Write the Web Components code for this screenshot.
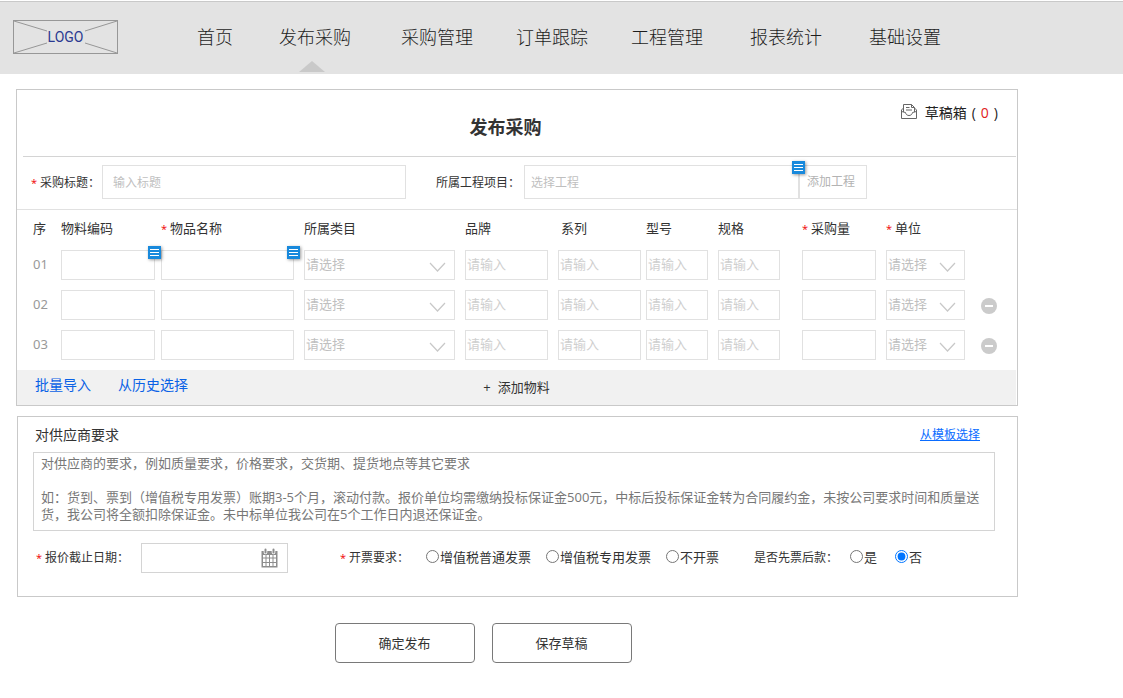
<!DOCTYPE html>
<html lang="zh-CN">
<head>
<meta charset="utf-8">
<meta name="viewport" content="width=device-width, initial-scale=1">
<title>发布采购</title>
<style>
  body {
    margin: 0;
    background: #fff;
    color: #333;
    font: 13px/18px "Open Sans", "Noto Sans CJK SC", sans-serif;
    --line: #c9c9c9;
    --line-soft: #e1e1e1;
    --hint: #bfbfbf;
    --link: #0a62e6;
  }
</style>
</head>
<body>
<site-header>
  <nav-tab>首页</nav-tab>
  <nav-tab active>发布采购</nav-tab>
  <nav-tab>采购管理</nav-tab>
  <nav-tab>订单跟踪</nav-tab>
  <nav-tab>工程管理</nav-tab>
  <nav-tab>报表统计</nav-tab>
  <nav-tab>基础设置</nav-tab>
</site-header>
<publish-page></publish-page>

<script>
function define(name, html, setup) {
  const template = document.createElement('template');
  template.innerHTML = html;
  customElements.define(name, class extends HTMLElement {
    connectedCallback() {
      if (this.shadowRoot) return;
      this.attachShadow({ mode: 'open' }).append(template.content.cloneNode(true));
      if (setup) setup(this, this.shadowRoot);
    }
  });
}

/* ---------- small parts ---------- */

define('logo-mark', `
  <style>
    :host { display: block; width: 105px; height: 34px; position: relative; }
    svg { display: block; }
    span { position: absolute; inset: 0; text-align: center; color: #2b3990;
      font: 14px/34px Roboto, sans-serif; }
  </style>
  <svg width="105" height="34" fill="none" stroke="#979797" aria-hidden="true">
    <rect x=".5" y=".5" width="104" height="33"/>
    <path d="M1 1l33 10M104 1L72 11M1 33l33-10M104 33L72 23"/>
  </svg>
  <span>LOGO</span>
`);

define('nav-tab', `
  <style>
    :host { display: block; position: relative; }
    a { color: #1c1c1c; text-decoration: none; font-size: 18px; line-height: 70px; font-weight: 300; }
    :host([active])::after { content: ""; position: absolute; left: 20px; bottom: 0;
      border: 13px solid transparent; border-top: 0; border-bottom: 11px solid #c9c9c9; }
  </style>
  <a href="#"><slot></slot></a>
`);

define('site-header', `
  <style>
    :host { display: flex; align-items: center; margin-top: 1px; padding: 0 0 2px 13px;
      height: 70px; border-top: 1px solid #c9c9c9; background: #e3e3e3; }
    nav { display: grid; grid-template-columns: 82px 122px 115px 115px 119px 119px 1fr;
      margin-left: 79px; }
  </style>
  <logo-mark></logo-mark>
  <nav><slot></slot></nav>
`);

define('req-mark', `
  <style>:host { color: #f00000; font-size: 11px; margin-right: 3px; }</style>*`);

define('note-mark', `
  <style>
    :host { display: block; position: absolute; z-index: 1; top: -4px; right: -6px;
      width: 13px; height: 13px; background: #1889dc; box-shadow: 1px 1px 3px #0006; }
    svg { display: block; }
  </style>
  <svg width="13" height="13" stroke="#fff" aria-hidden="true"><path d="M2 3.5h9M2 6.5h9M2 9.5h9"/></svg>
`);

define('cell-input', `
  <style>
    :host { display: block; position: relative; }
    input { display: block; box-sizing: border-box; width: 100%; height: 30px; padding: 0 1px 2px;
      border: 1px solid var(--line-soft); background: #fff; font: inherit; color: #333; outline: 0; }
    input::placeholder { color: #cfcfcf; opacity: 1; }
  </style>
  <input type="text"><slot></slot>
`, (host, root) => {
  const input = root.querySelector('input');
  input.placeholder = host.getAttribute('placeholder') || '';
  input.setAttribute('aria-label', host.getAttribute('label'));
});

define('cell-select', `
  <style>
    :host { display: block; position: relative; }
    select { display: block; appearance: none; box-sizing: border-box; width: 100%; height: 30px;
      padding: 0 1px 2px; border: 1px solid var(--line-soft); border-radius: 0; background: #fff;
      font: inherit; color: var(--hint); outline: 0; }
    svg { position: absolute; right: 9px; top: 12px; pointer-events: none; }
  </style>
  <select><option>请选择</option></select>
  <svg width="17" height="10" fill="none" stroke="#c8c8c8" stroke-width="1.2" aria-hidden="true"><path d="M1 1l7.500 8L16 1"/></svg>
`, (host, root) => root.querySelector('select').setAttribute('aria-label', host.getAttribute('label')));

define('remove-button', `
  <style>
    :host { display: block; }
    button { display: block; width: 16px; height: 16px; margin-top: 8px; padding: 0; border: 0; background: none; }
    svg { display: block; }
  </style>
  <button type="button" aria-label="删除">
    <svg width="16" height="16"><circle cx="8" cy="8" r="8" fill="#cbcbcb"/><path d="M4 7h8v2H4z" fill="#fff"/></svg>
  </button>
`);

define('ui-panel', `
  <style>:host { display: block; border: 1px solid var(--line); }</style>
  <slot></slot>
`);

/* ---------- purchase panel ---------- */

define('panel-title', `
  <style>
    :host { display: grid; grid-template-columns: 1fr auto 1fr; height: 66px; margin: 0 1px 0 6px;
      border-bottom: 1px solid #d4d4d4; }
    h1 { grid-column: 2; margin: 0 28px 0 0; font-size: 18px; line-height: 74px; font-weight: 700; }
    a { justify-self: end; align-self: start; display: flex; gap: 8px; margin: 13px 18px 0 0;
      font-size: 14px; line-height: 20px; color: #222; text-decoration: none; }
    svg { margin-top: 1px; }
    b { font-weight: 400; color: #e02020; }
    span { display: flex; gap: 5px; }
  </style>
  <h1>发布采购</h1>
  <a href="#">
    <svg width="16" height="16" fill="none" stroke="#666" aria-hidden="true">
      <path d="M2.500 8V.5h8l3 3V8M10.500 .5v3h3M5 3.500h3.500M5 6h6M2.500 4L.5 6v8.500h15V6l-2-2M.5 7.500l4 1c.6 4 6.400 4 7 0l4-1"/>
    </svg>
    <span>草稿箱 <i style="font-style:normal">(</i> <b>0</b> <i style="font-style:normal">)</i></span>
  </a>
`);

define('purchase-fields', `
  <style>
    :host { display: flex; height: 44px; padding: 8px 0 0 14px; font-size: 12px;
      border-bottom: 1px solid var(--line-soft); }
    label { flex: none; line-height: 35px; }
    .first { width: 71px; }
    .second { width: 88px; margin-left: 30px; }
    input, button { box-sizing: border-box; height: 34px; border: 1px solid var(--line-soft);
      background: #fff; font: inherit; outline: 0; }
    input { width: 100%; padding: 0 6px; }
    .title { flex: 304; }
    .title input { padding: 0 10px; }
    .project { flex: 275; position: relative; }
    input::placeholder { color: var(--hint); opacity: 1; }
    button { flex: none; width: 68px; padding: 0 0 0 7px; margin-right: 150px; text-align: left; color: #b3b3b3; }
  </style>
  <label class="first" for="title"><req-mark></req-mark>采购标题：</label>
  <div class="title"><input id="title" placeholder="输入标题"></div>
  <label class="second" for="project">所属工程项目：</label>
  <div class="project"><input id="project" placeholder="选择工程"><note-mark></note-mark></div>
  <button type="button">添加工程</button>
`);

define('material-table', `
  <style>
    :host { display: block; }
    table { width: 100%; table-layout: fixed; border-collapse: collapse; }
    th, td { padding: 0 10px 0 0; text-align: left; vertical-align: top; font-weight: 400; }
    th { height: 40px; line-height: 36px; white-space: nowrap; }
    td { height: 40px; }
    tr > :nth-child(1) { padding: 0 0 0 16px; }
    td:nth-child(1) { color: #999; line-height: 29px; font-family: "Noto Sans", sans-serif; }
    tr > :nth-child(2) { padding-right: 6px; }
    tr > :nth-child(6) { padding-right: 5px; }
    th:nth-child(6) { padding-left: 3px; }
    tr > :nth-child(8) { padding-right: 22px; }
    tr > :nth-child(10) { padding-right: 16px; }
    tr > :nth-child(11) { padding: 0; }
  </style>
  <table>
    <colgroup></colgroup>
    <thead><tr>
      <th>序</th><th>物料编码</th><th><req-mark></req-mark>物品名称</th><th>所属类目</th><th>品牌</th>
      <th>系列</th><th>型号</th><th>规格</th><th><req-mark></req-mark>采购量</th><th><req-mark></req-mark>单位</th><th></th>
    </tr></thead>
    <tbody></tbody>
  </table>
`, (host, root) => {
  root.querySelector('colgroup').innerHTML =
    [44, 100, 143, 161, 93, 88, 72, 84, 84, 95, 36].map(w => `<col style="width:${w}px">`).join('');
  root.querySelector('tbody').innerHTML = ['01', '02', '03'].map((no, i) => {
    const note = i ? '' : '<note-mark></note-mark>';
    const typed = ['品牌', '系列', '型号', '规格']
      .map(l => `<td><cell-input label="${l}" placeholder="请输入"></cell-input></td>`).join('');
    return `<tr><td>${no}</td>
      <td><cell-input label="物料编码">${note}</cell-input></td>
      <td><cell-input label="物品名称">${note}</cell-input></td>
      <td><cell-select label="所属类目"></cell-select></td>${typed}
      <td><cell-input label="采购量"></cell-input></td>
      <td><cell-select label="单位"></cell-select></td>
      <td>${i ? '<remove-button></remove-button>' : ''}</td></tr>`;
  }).join('');
});

define('table-actions', `
  <style>
    :host { display: grid; grid-template-columns: 1fr auto 1fr; height: 35px; margin-right: 1px; background: #f1f1f1; }
    div { display: flex; gap: 27px; padding-left: 18px; font-size: 14px; line-height: 29px; }
    a { color: var(--link); text-decoration: none; }
    button { border: 0; padding: 0; background: none; font: inherit; line-height: 35px; color: #333; display: flex; gap: 7px; }
  </style>
  <div><a href="#">批量导入</a><a href="#">从历史选择</a></div>
  <button type="button"><span>+</span><span>添加物料</span></button>
`);

/* ---------- supplier panel ---------- */

define('supplier-note', `
  <style>
    :host { display: block; padding: 0 22px 0 15px; }
    header { display: flex; justify-content: space-between; padding: 0 15px 0 2px; line-height: 35px; }
    label { font-size: 14px; }
    a { font-size: 12px; color: #0a6cff; }
    textarea { display: block; box-sizing: border-box; width: 100%; height: 79px; resize: none; overflow: hidden;
      padding: 2px 7px; border: 1px solid #d4d4d4; border-radius: 0; font: inherit; line-height: 17px; color: #777; outline: 0; }
  </style>
  <header><label for="note">对供应商要求</label><a href="#">从模板选择</a></header>
  <textarea id="note">对供应商的要求，例如质量要求，价格要求，交货期、提货地点等其它要求

如：货到、票到（增值税专用发票）账期3-5个月，滚动付款。报价单位均需缴纳投标保证金500元，中标后投标保证金转为合同履约金，未按公司要求时间和质量送货，我公司将全额扣除保证金。未中标单位我公司在5个工作日内退还保证金。</textarea>
`);

define('quote-options', `
  <style>
    :host { display: flex; align-items: center; padding: 12px 0 23px 18px; }
    .name { font-size: 12px; flex: none; line-height: 20px; }
    .date-name { width: 105px; }
    .date { position: relative; width: 147px; margin-right: 52px; }
    .date input { display: block; box-sizing: border-box; width: 100%; height: 30px; padding: 0 30px 0 6px;
      border: 1px solid #d4d4d4; font: inherit; outline: 0; }
    .date svg { position: absolute; right: 10px; top: 5px; }
    fieldset { display: flex; align-items: center; margin: 0; padding: 0; border: 0; min-width: 0; }
    .invoice { width: 86px; }
    .prepay { width: 96px; }
    fieldset + fieldset { margin-left: 35px; }
    .choices { display: flex; gap: 15px; padding-bottom: 2px; }
    .prepay + .choices { gap: 18px; }
    .choices label { display: flex; align-items: center; gap: 1px; white-space: nowrap; }
    input[type=radio] { width: 13px; height: 13px; margin: 0 0 1px; }
  </style>
  <label class="name date-name" for="deadline"><req-mark></req-mark>报价截止日期：</label>
  <div class="date">
    <input id="deadline" type="text">
    <svg width="17" height="20" aria-hidden="true">
      <path d="M.5 3h16v16.500H.5z" fill="#8d8d8d"/>
      <path d="M2 7h2.500v2.500H2zM5.500 7H8v2.500H5.500zM9 7h2.500v2.500H9zM12.500 7H15v2.500h-2.500zM2 10.500h2.500V14H2zM5.500 10.500H8V14H5.500zM9 10.500h2.500V14H9zM12.500 10.500H15V14h-2.500zM2 15h2.500v3H2zM5.500 15H8v3H5.500zM9 15h2.500v3H9zM12.500 15H15v3h-2.500z" fill="#fff"/>
      <path d="M4.500 1.500v3M12.500 1.500v3" stroke="#fff" stroke-width="3.600" stroke-linecap="round"/>
      <path d="M4.500 1.500v3M12.500 1.500v3" stroke="#8d8d8d" stroke-width="2" stroke-linecap="round"/>
    </svg>
  </div>
  <fieldset aria-labelledby="invoice">
    <span class="name invoice" id="invoice"><req-mark></req-mark>开票要求：</span>
    <div class="choices">
      <label><input type="radio" name="invoice">增值税普通发票</label>
      <label><input type="radio" name="invoice">增值税专用发票</label>
      <label><input type="radio" name="invoice">不开票</label>
    </div>
  </fieldset>
  <fieldset aria-labelledby="prepay">
    <span class="name prepay" id="prepay">是否先票后款：</span>
    <div class="choices">
      <label><input type="radio" name="prepay">是</label>
      <label><input type="radio" name="prepay" checked>否</label>
    </div>
  </fieldset>
`);

define('action-button', `
  <style>
    :host { display: block; }
    button { display: block; width: 140px; height: 40px; padding: 0; border: 1px solid #797979; border-radius: 4px;
      background: #fff; font: inherit; color: #333; }
  </style>
  <button type="button"><slot></slot></button>
`);

define('publish-page', `
  <style>
    :host { display: block; padding: 15px 105px 35px 16px; }
    .supplier { margin: 10px 0 0 1px; }
    footer { display: flex; justify-content: center; gap: 17px; margin: 26px 68px 0 0; }
  </style>
  <main>
    <ui-panel>
      <panel-title></panel-title>
      <purchase-fields></purchase-fields>
      <material-table></material-table>
      <table-actions></table-actions>
    </ui-panel>
    <ui-panel class="supplier">
      <supplier-note></supplier-note>
      <quote-options></quote-options>
    </ui-panel>
    <footer>
      <action-button>确定发布</action-button>
      <action-button>保存草稿</action-button>
    </footer>
  </main>
`);
</script>
</body>
</html>
